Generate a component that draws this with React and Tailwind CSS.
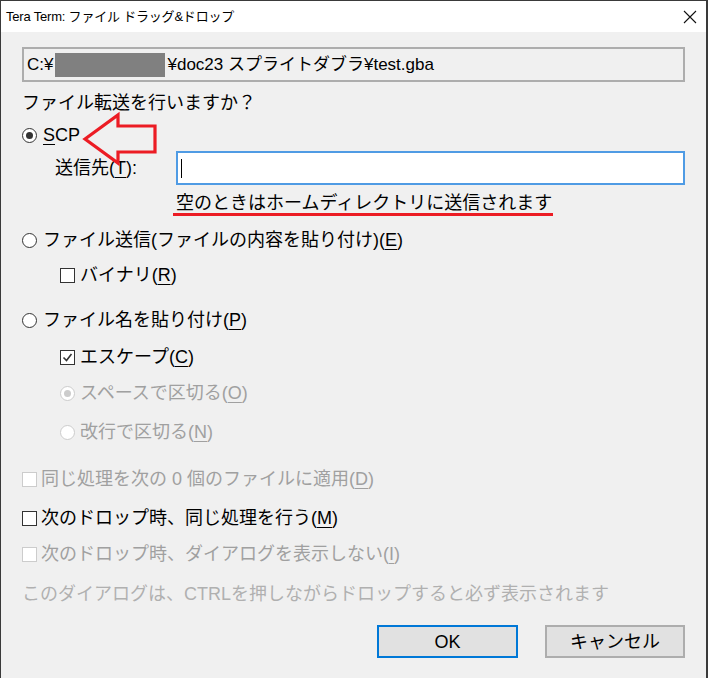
import React from 'react';

function Radio({ checked, disabled }) {
  return (
    <span
      className={`flex h-[15px] w-[15px] shrink-0 items-center justify-center rounded-full border bg-white ${
        disabled ? 'border-[#cccccc]' : 'border-[#333333]'
      }`}
    >
      {checked && (
        <span
          className={`h-[7px] w-[7px] rounded-full ${disabled ? 'bg-[#cccccc]' : 'bg-[#333333]'}`}
        />
      )}
    </span>
  );
}

function Check({ checked, disabled }) {
  return (
    <span
      className={`flex h-[15px] w-[15px] shrink-0 items-center justify-center border bg-white ${
        disabled ? 'border-[#cccccc]' : 'border-[#333333]'
      }`}
    >
      {checked && (
        <svg width="11" height="11" viewBox="0 0 11 11">
          <path d="M1.5 5.5 L4.5 8.5 L9.5 2" fill="none" stroke="#333" strokeWidth="1.6" />
        </svg>
      )}
    </span>
  );
}

// mnemonic letter
function K({ children }) {
  return <span className="underline underline-offset-[3px] decoration-1">{children}</span>;
}

export default function App() {
  return (
    <div className="relative h-[678px] w-[708px] overflow-hidden border-l border-r-2 border-t border-[#3a3a3a] bg-[#f0f0f0] font-['Liberation_Sans','Noto_Sans_CJK_JP',sans-serif] text-[18px] leading-none text-black">
      {/* title bar */}
      <div className="flex h-[31px] items-center justify-between bg-white pl-[5px] pr-[9px]">
        <span className="text-[13px] tracking-[-0.2px]">Tera Term: ファイル ドラッグ&amp;ドロップ</span>
        <svg width="14" height="14" viewBox="0 0 14 14">
          <path d="M1 1 L13 13 M13 1 L1 13" stroke="#111" strokeWidth="1.1" />
        </svg>
      </div>

      <div className="flex flex-col pl-[21px] pr-[21px]">
        {/* path */}
        <div className="mt-[15px] flex h-[35px] items-center border-2 border-[#adadad] pl-[3px] text-[17px]">
          <span>C:¥</span>
          <span className="mx-[2px] h-[24px] w-[110px] bg-[#808080]" />
          <span>¥doc23 スプライトダブラ¥test.gba</span>
        </div>

        <div className="mt-[9px] flex h-[24px] items-center">ファイル転送を行いますか？</div>

        <div className="mt-[8px] flex h-[24px] items-center gap-[6px]">
          <Radio checked />
          <span>
            <K>S</K>CP
          </span>
        </div>

        <div className="mt-[4px] flex h-[34px] items-center">
          <span className="w-[154px] pl-[33px]">
            送信先(<K>T</K>):
          </span>
          <div className="flex h-[34px] flex-1 items-center border-2 border-[#4f9be4] bg-white pl-[3px]">
            <span className="h-[19px] w-px bg-black" />
          </div>
        </div>

        <div className="mt-[6px] flex h-[24px] items-center pl-[154px]">空のときはホームディレクトリに送信されます</div>

        <div className="mt-[13px] flex h-[24px] items-center gap-[6px]">
          <Radio />
          <span>
            ファイル送信(ファイルの内容を貼り付け)(<K>E</K>)
          </span>
        </div>

        <div className="mt-[11px] flex h-[24px] items-center gap-[5px] pl-[38px]">
          <Check />
          <span>
            バイナリ(<K>R</K>)
          </span>
        </div>

        <div className="mt-[21px] flex h-[24px] items-center gap-[6px]">
          <Radio />
          <span>
            ファイル名を貼り付け(<K>P</K>)
          </span>
        </div>

        <div className="mt-[13px] flex h-[24px] items-center gap-[5px] pl-[38px]">
          <Check checked />
          <span>
            エスケープ(<K>C</K>)
          </span>
        </div>

        <div className="mt-[12px] flex h-[24px] items-center gap-[5px] pl-[38px] text-[#a0a0a0]">
          <Radio checked disabled />
          <span>
            スペースで区切る(<K>O</K>)
          </span>
        </div>

        <div className="mt-[15px] flex h-[24px] items-center gap-[5px] pl-[38px] text-[#a0a0a0]">
          <Radio disabled />
          <span>
            改行で区切る(<K>N</K>)
          </span>
        </div>

        <div className="mt-[23px] flex h-[24px] items-center gap-[4px] text-[#a0a0a0]">
          <Check disabled />
          <span>
            同じ処理を次の 0 個のファイルに適用(<K>D</K>)
          </span>
        </div>

        <div className="mt-[15px] flex h-[24px] items-center gap-[4px]">
          <Check />
          <span>
            次のドロップ時、同じ処理を行う(<K>M</K>)
          </span>
        </div>

        <div className="mt-[12px] flex h-[24px] items-center gap-[4px] text-[#a0a0a0]">
          <Check disabled />
          <span>
            次のドロップ時、ダイアログを表示しない(<K>I</K>)
          </span>
        </div>

        <div className="mt-[16px] flex h-[24px] items-center text-[#b0b0b0]">
          このダイアログは、CTRLを押しながらドロップすると必ず表示されます
        </div>

        <div className="mt-[19px] flex justify-end gap-[27px]">
          <button className="flex h-[33px] w-[141px] items-center justify-center border-2 border-[#0078d7] bg-[#e1e1e1]">
            OK
          </button>
          <button className="flex h-[33px] w-[140px] items-center justify-center border-2 border-[#adadad] bg-[#e1e1e1]">
            キャンセル
          </button>
        </div>
      </div>

      {/* red annotations drawn over the dialog */}
      <svg className="absolute left-[78px] top-[109px]" width="82" height="58" viewBox="0 0 82 58">
        <polygon
          points="6,29 39,5 39,16 76,16 76,42 39,42 39,53"
          fill="none"
          stroke="#ec1c24"
          strokeWidth="3.2"
          strokeLinejoin="miter"
        />
      </svg>
      <div className="absolute left-[172px] top-[212px] h-[3px] w-[380px] bg-[#ec1c24]" />
    </div>
  );
}
